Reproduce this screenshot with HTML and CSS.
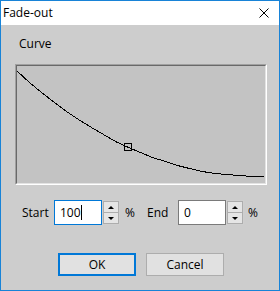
FILE: index.html
```html
<!DOCTYPE html>
<html lang="en">
<head>
  <meta charset="UTF-8" />
  <title>Fade-out</title>
  <link rel="stylesheet" href="styles.css">
</head>
<body>

  <div class="window">
    <!-- Title bar -->
    <div class="titlebar">
      <span class="title">Fade-out</span>
      <svg class="close" width="10" height="10" viewBox="0 0 10 10">
        <path d="M0.5 0.5 L9.5 9.5 M9.5 0.5 L0.5 9.5" stroke="#000" stroke-width="1" fill="none"/>
      </svg>
    </div>

    <div class="content">
      <div class="group-label">Curve</div>

      <div class="curve-box">
        <div class="curve-inner">
          <svg width="248" height="117" viewBox="0 0 248 117" shape-rendering="crispEdges">
            <polyline fill="none" stroke="#000" stroke-width="1"
              points="0.5,5.5 12.5,16.5 24.5,26.5 37.5,36.5 49.5,45.5 61.5,53.5 74.5,61.5 86.5,68.5 98.5,75.5 111.5,81.5 123.5,86.5 135.5,91.5 148.5,95.5 160.5,99.5 172.5,102.5 185.5,105.5 197.5,107.5 209.5,108.5 222.5,109.5 234.5,110.5 246.5,110.5"/>
            <rect x="107.5" y="77.5" width="7" height="7" fill="none" stroke="#000" stroke-width="1"/>
          </svg>
        </div>
      </div>

      <div class="fields">
        <span class="field-label start-label">Start</span>
        <div class="spin-edit">
          <div class="edit focused">100<span class="caret"></span></div>
          <div class="spinner">
            <div class="spin-btn"><span class="arrow-up"></span></div>
            <div class="spin-btn"><span class="arrow-down"></span></div>
          </div>
        </div>
        <span class="pct start-pct">%</span>

        <span class="field-label end-label">End</span>
        <div class="spin-edit">
          <div class="edit">0</div>
          <div class="spinner">
            <div class="spin-btn"><span class="arrow-up"></span></div>
            <div class="spin-btn"><span class="arrow-down"></span></div>
          </div>
        </div>
        <span class="pct end-pct">%</span>
      </div>

      <div class="buttons">
        <button class="btn btn-default">OK</button>
        <button class="btn">Cancel</button>
      </div>
    </div>
  </div>

</body>
</html>
```

FILE: styles.css
```css
* {
  box-sizing: border-box;
}

body {
  margin: 0;
  font-family: 'Open Sans', 'Liberation Sans', sans-serif;
  font-size: 12px;
  color: #000;
  background: #cdcdcd;
}

.window {
  width: 280px;
  height: 291px;
  border: 1px solid #1883d7;
  background: #cdcdcd;
}

.titlebar {
  height: 24px;
  background: #fff;
  display: flex;
  align-items: center;
  justify-content: space-between;
  padding: 0 10px 0 2px;
}

.title {
  line-height: 16px;
}

.close {
  display: block;
}

.content {
  padding-top: 11px;
}

.group-label {
  margin-left: 18px;
  line-height: 16px;
}

.curve-box {
  margin: 12px 0 0 14px;
  width: 252px;
  height: 121px;
  border: 1px solid;
  border-color: #a0a0a0 #fff #fff #a0a0a0;
}

.curve-inner {
  height: 100%;
  border: 1px solid;
  border-color: #696969 #e3e3e3 #e3e3e3 #696969;
  background: #c3c3c3;
}

.curve-inner svg {
  display: block;
}

.fields {
  display: flex;
  align-items: center;
  margin-top: 15px;
  padding-left: 21px;
  height: 25px;
}

.start-label {
  width: 32px;
}

.end-label {
  width: 31px;
}

.pct {
  margin-left: 5px;
}

.start-pct {
  width: 22px;
}

.end-pct {
  margin-left: 4px;
}

.spin-edit {
  display: flex;
  height: 25px;
}

.edit {
  width: 48px;
  height: 25px;
  border: 1px solid #7a7a7a;
  background: #fff;
  padding-left: 5px;
  line-height: 23px;
  display: flex;
  align-items: center;
}

.edit.focused {
  border-color: #0078d7;
}

.caret {
  display: inline-block;
  width: 1px;
  height: 15px;
  background: #000;
}

.spinner {
  width: 18px;
  height: 25px;
  border: 1px solid #cfcfcf;
  display: flex;
  flex-direction: column;
}

.spin-btn {
  flex: 1;
  border: 1px solid #adadad;
  background: #e5e5e5;
  display: flex;
  align-items: center;
  justify-content: center;
}

.spin-btn + .spin-btn {
  border-top: none;
}

.arrow-up {
  width: 0;
  height: 0;
  border-left: 3px solid transparent;
  border-right: 3px solid transparent;
  border-bottom: 3px solid #000;
}

.arrow-down {
  width: 0;
  height: 0;
  border-left: 3px solid transparent;
  border-right: 3px solid transparent;
  border-top: 3px solid #000;
}

.buttons {
  display: flex;
  gap: 10px;
  margin-top: 28px;
  padding-left: 57px;
}

.btn {
  width: 78px;
  height: 23px;
  padding: 0;
  border: 1px solid #adadad;
  background: #e1e1e1;
  font-family: inherit;
  font-size: 12px;
  color: #000;
}

.btn-default {
  border: 2px solid #0078d7;
}
```
